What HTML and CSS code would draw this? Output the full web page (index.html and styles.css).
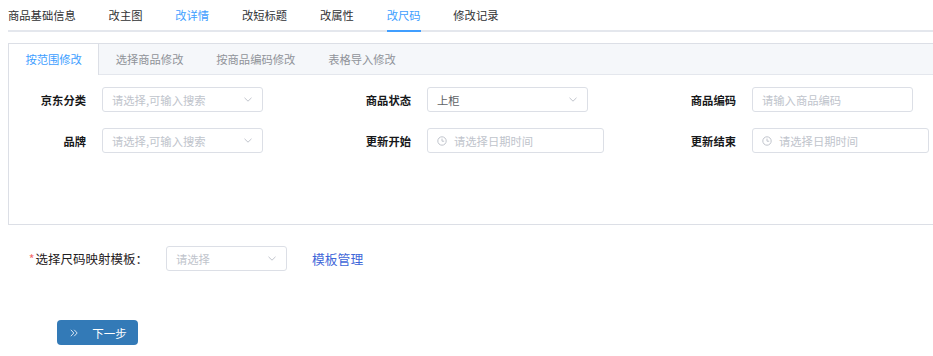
FILE: index.html
```html
<!DOCTYPE html>
<html lang="zh-CN">
<head>
<meta charset="utf-8">
<title>改尺码</title>
<link rel="stylesheet" href="styles.css">
</head>
<body>
<div class="page">
  <div class="top-tabs">
    <div class="top-tab"><span>商品基础信息</span></div>
    <div class="top-tab"><span>改主图</span></div>
    <div class="top-tab blue"><span>改详情</span></div>
    <div class="top-tab"><span>改短标题</span></div>
    <div class="top-tab"><span>改属性</span></div>
    <div class="top-tab blue active"><span>改尺码</span></div>
    <div class="top-tab"><span>修改记录</span></div>
  </div>

  <div class="card">
    <div class="card-head">
      <div class="card-tab active">按范围修改</div>
      <div class="card-tab">选择商品修改</div>
      <div class="card-tab">按商品编码修改</div>
      <div class="card-tab">表格导入修改</div>
    </div>
    <div class="card-body">
      <div class="form-grid">
        <div class="field">
          <label class="field-label">京东分类</label>
          <div class="input select w161"><span class="ph">请选择,可输入搜索</span><svg class="chev" width="8" height="5" viewBox="0 0 8 5"><path d="M0.5 0.8L4 4.2 7.5 0.8"/></svg></div>
        </div>
        <div class="field">
          <label class="field-label">商品状态</label>
          <div class="input select w161"><span class="val">上柜</span><svg class="chev" width="8" height="5" viewBox="0 0 8 5"><path d="M0.5 0.8L4 4.2 7.5 0.8"/></svg></div>
        </div>
        <div class="field">
          <label class="field-label">商品编码</label>
          <div class="input w161"><span class="ph">请输入商品编码</span></div>
        </div>
        <div class="field">
          <label class="field-label">品牌</label>
          <div class="input select w161"><span class="ph">请选择,可输入搜索</span><svg class="chev" width="8" height="5" viewBox="0 0 8 5"><path d="M0.5 0.8L4 4.2 7.5 0.8"/></svg></div>
        </div>
        <div class="field">
          <label class="field-label">更新开始</label>
          <div class="input date w177"><svg class="clock" width="10" height="10" viewBox="0 0 10 10"><circle cx="5" cy="5" r="4.2"/><path d="M5 2.6V5.2H7.2"/></svg><span class="ph">请选择日期时间</span></div>
        </div>
        <div class="field">
          <label class="field-label">更新结束</label>
          <div class="input date w177"><svg class="clock" width="10" height="10" viewBox="0 0 10 10"><circle cx="5" cy="5" r="4.2"/><path d="M5 2.6V5.2H7.2"/></svg><span class="ph">请选择日期时间</span></div>
        </div>
      </div>
    </div>
  </div>

  <div class="tpl-row">
    <label class="tpl-label"><span class="star">*</span>选择尺码映射模板：</label>
    <div class="input select w121"><span class="ph">请选择</span><svg class="chev" width="8" height="5" viewBox="0 0 8 5"><path d="M0.5 0.8L4 4.2 7.5 0.8"/></svg></div>
    <a class="tpl-link" href="#">模板管理</a>
  </div>

  <button class="next-btn" type="button"><svg class="dbl" width="8" height="8" viewBox="0 0 8 8"><path d="M0.8 0.8L3.8 4 0.8 7.2M4.2 0.8L7.2 4 4.2 7.2"/></svg><span>下一步</span></button>
</div>
</body>
</html>
```

FILE: styles.css
```css
html, body {
  margin: 0;
  padding: 0;
  background: #ffffff;
  overflow: hidden;
}

body {
  font-family: "Noto Sans CJK SC", "Noto Sans", sans-serif;
  font-size: 11.3px;
  color: #303133;
}

.page {
  width: 933px;
  height: 356px;
}

/* top tabs */
.top-tabs {
  display: flex;
  margin-left: 8px;
  border-bottom: 2px solid #e4e7ed;
}

.top-tab {
  padding: 0 16.4px;
  margin-bottom: -2px;
  color: #303133;
}

.top-tab:first-child {
  padding-left: 0;
}

.top-tab span {
  display: block;
  line-height: 30px;
  border-bottom: 2px solid transparent;
}

.top-tab.blue {
  color: #409eff;
}

.top-tab.active span {
  border-bottom-color: #409eff;
}

/* card (continues past the right edge of the view, so no right border) */
.card {
  margin: 11px 0 0 8px;
  border: 1px solid #dcdfe6;
  border-right: none;
  background: #fff;
}

.card-head {
  display: flex;
  height: 30px;
  background: #f5f7fa;
  border-bottom: 1px solid #e4e7ed;
}

.card-tab {
  padding: 0 16.4px;
  line-height: 30px;
  color: #909399;
}

.card-tab.active {
  height: 31px;
  background: #fff;
  color: #409eff;
  border-right: 1px solid #dcdfe6;
}

.card-body {
  padding: 12px 0 71px 0;
}

.form-grid {
  display: grid;
  grid-template-columns: 325px 325px 1fr;
  row-gap: 16px;
}

.field {
  display: flex;
  align-items: center;
}

.field-label {
  width: 77px;
  margin-right: 16px;
  text-align: right;
  font-weight: 700;
  color: #17181a;
}

/* inputs */
.input {
  box-sizing: border-box;
  height: 25px;
  border: 1px solid #dcdfe6;
  border-radius: 3px;
  background: #fff;
  display: flex;
  align-items: center;
  padding: 0 10px 0 9px;
}

.w161 { width: 161px; }
.w177 { width: 177px; }
.w121 { width: 121px; }

.select {
  justify-content: space-between;
}

.ph {
  color: #c0c4cc;
  white-space: nowrap;
}

.val {
  color: #606266;
}

.chev {
  flex: none;
}

.chev path {
  fill: none;
  stroke: #c0c4cc;
  stroke-width: 1;
}

.date {
  padding-left: 9px;
}

.clock {
  flex: none;
  margin-right: 7px;
}

.clock circle,
.clock path {
  fill: none;
  stroke: #c0c4cc;
  stroke-width: 1;
}

/* template row */
.tpl-row {
  display: flex;
  align-items: center;
  margin-top: 21px;
  height: 25px;
}

.tpl-label {
  width: 142px;
  margin-left: 6px;
  margin-right: 18px;
  text-align: right;
  font-size: 12.5px;
  color: #1f2022;
  white-space: nowrap;
}

.star {
  color: #f56c6c;
  margin-right: 1px;
}

.tpl-link {
  margin-left: 25px;
  font-size: 12.8px;
  color: #3f67d9;
  text-decoration: none;
}

/* next button */
.next-btn {
  margin: 49px 0 0 57px;
  width: 81px;
  height: 25px;
  border: none;
  border-radius: 4px;
  background: #337ab7;
  color: #fff;
  font-family: "Noto Sans CJK SC", "Noto Sans", sans-serif;
  font-size: 11.5px;
  display: flex;
  align-items: center;
  justify-content: center;
  gap: 14px;
  padding: 0 0 0 2px;
  cursor: pointer;
}

.dbl path {
  fill: none;
  stroke: #d6e4f2;
  stroke-width: 1;
}
```
